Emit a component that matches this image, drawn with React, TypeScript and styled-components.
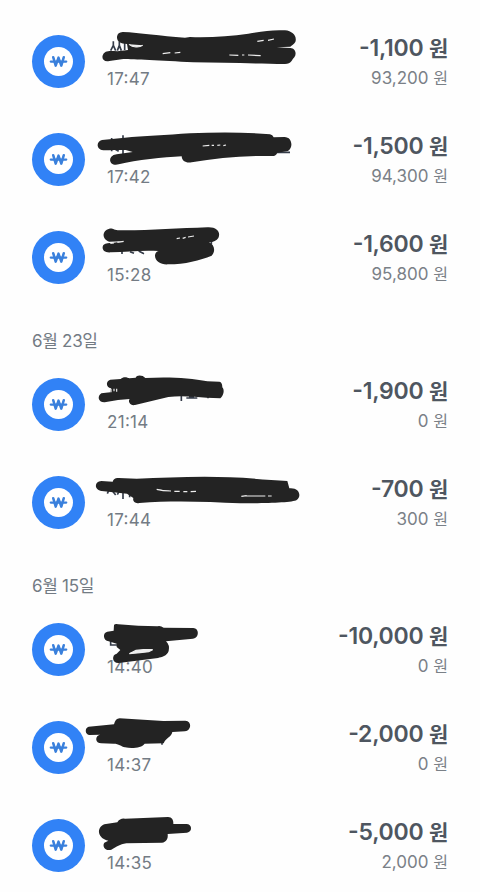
import React from "react";
import styled, { createGlobalStyle } from "styled-components";

const GlobalStyle = createGlobalStyle`
  * {
    box-sizing: border-box;
  }

  body {
    margin: 0;
    background: #fefefe;
    font-family: Inter, "Noto Sans CJK KR", sans-serif;
    font-feature-settings: "case" 1;
  }
`;

const Page = styled.main`
  width: 480px;
  height: 892px;
  padding: 12px 32px 0 32px;
  overflow: hidden;
`;

const DateHeading = styled.h2`
  height: 49px;
  margin: 0;
  padding-top: 22px;
  font-size: 17px;
  font-weight: 400;
  line-height: 26px;
  letter-spacing: -0.3px;
  color: #737b84;
`;

const Row = styled.div`
  display: flex;
  align-items: center;
  height: 98px;
`;

const Badge = styled.div`
  display: flex;
  align-items: center;
  justify-content: center;
  flex: none;
  width: 53px;
  height: 53px;
  border-radius: 50%;
  background: #3182f6;
`;

const Details = styled.div`
  position: relative;
  flex: 1;
  height: 98px;
  margin-left: 22px;
  padding-top: 54px;
`;

const Time = styled.div`
  font-size: 17px;
  line-height: 26px;
  letter-spacing: 0.3px;
  color: #737b84;
`;

const Scribble = styled.svg`
  position: absolute;
  top: 10px;
  left: -17px;
  overflow: visible;
  pointer-events: none;
`;

const Amounts = styled.div`
  display: flex;
  flex-direction: column;
  height: 98px;
  padding-top: 20px;
  text-align: right;
  white-space: nowrap;
`;

const Unit = styled.span<{ size: number }>`
  font-size: ${({ size }) => size}px;
`;

const Amount = styled.div`
  height: 32px;
  font-size: 23px;
  font-weight: 600;
  line-height: 32px;
  letter-spacing: -0.25px;
  color: #4e5660;
`;

const Balance = styled.div`
  margin-top: 1px;
  font-size: 17px;
  line-height: 26px;
  letter-spacing: 0;
  color: #7a8087;
`;

const INK = "#232323";

interface Entry {
  time: string;
  amount: string;
  balance: string;
  // filled outline of the marker, in thirds of a pixel
  marker: string;
  // paper still visible between strokes
  gaps?: string;
  // bits of the name sticking out
  name?: string;
}

interface Group {
  date?: string;
  entries: Entry[];
}

const groups: Group[] = [
  {
    entries: [
      {
        time: "17:47",
        amount: "-1,100",
        balance: "93,200",
        marker:
          "M98 30C150 32 210 42 285 47L300 45C360 47 420 43 475 35C520 28 545 23 585 25C608 27 622 43 616 60C612 67 605 71 601 74L560 76L601 78C616 79 621 94 613 106C605 113 605 126 585 126C500 125 400 122 310 121C210 115 130 112 100 111L58 117C43 122 33 109 39 98C44 87 55 85 82 88L114 84L111 66C92 65 80 59 81 44C82 35 88 31 98 30Z",
        gaps: "M117 67C128 76 147 78 158 70M218 95L241 92M254 93L271 91M502 58L521 55M534 55L552 51M418 99L445 100M456 99L463 99M474 99L512 101",
        name: "M70 58L70 70L62 86M70 70L77 86M88 58L88 70L82 86M88 70L94 86M104 54L104 84M120 65C120 74 145 76 154 68",
      },
      {
        time: "17:42",
        amount: "-1,500",
        balance: "94,300",
        marker:
          "M36 60L104 53C160 49 230 45 300 40C380 36 465 36 540 43Q548 44 551 52L583 51C611 51 609 91 590 94L562 98Q558 108 547 108C460 106 380 114 305 127C288 130 276 124 275 109C220 112 140 120 86 133C65 139 54 122 64 110Q69 104 80 103L128 96L107 90C87 90 60 90 40 91C18 89 18 64 36 60Z",
        gaps: "M338 78L358 76M365 76L372 76M382 76L391 75M400 77L408 75",
        name: "M65 54V94M76 88L86 94M99 46V103M560 97H600",
      },
      {
        time: "15:28",
        amount: "-1,600",
        balance: "95,800",
        marker:
          "M58 32C69 30 72 37 88 37C170 38 265 31 352 28C381 26 393 43 385 60C380 68 371 72 357 73C373 80 378 99 365 113C330 127 285 139 235 139C213 141 194 129 195 112Q196 101 206 99C160 96 110 101 64 103C40 106 34 91 40 81C48 74 57 76 67 75L81 73L98 70L58 71C36 66 34 38 58 32Z",
        gaps: "M61 76L72 75M82 73L101 70M260 62L270 60M278 61L287 58M294 57L312 54",
        name: "M96 99V108M120 101L132 106M146 99L162 107M364 69V79",
      },
    ],
  },
  {
    date: "6월 23일",
    entries: [
      {
        time: "21:14",
        amount: "-1,900",
        balance: "0",
        marker:
          "M61 44L92 42C100 33 113 37 118 40L137 38C140 29 158 30 166 39C230 35 300 38 352 49L388 50C396 51 397 61 397 67C405 75 400 94 391 100L350 98C315 96 275 90 235 96L135 120C120 123 113 108 119 102L84 105L44 112C24 113 21 93 34 85L61 82L63 70C47 66 47 48 61 44Z",
        gaps: "M63 71V82M72 71V79M80 71V80",
        name: "M67 66V88M82 70L90 80M274 88V108M289 99H322M297 94H312M354 93V100",
      },
      {
        time: "17:44",
        amount: "-700",
        balance: "300",
        marker:
          "M34 54L68 56Q72 43 86 45L140 47C230 44 330 38 420 43C480 45 540 51 592 54L598 76C628 73 636 99 620 111C608 119 520 121 450 121C350 116 250 112 148 120C135 123 127 115 130 105L111 92L35 84C12 81 12 55 34 54Z",
        gaps: "M200 79C214 83 227 84 243 84M253 85H269M280 86H292M302 86L318 85M454 100L470 98M470 99H526M534 99H545",
        name: "M56 83L52 92M68 85L77 96M87 86L82 95M99 88V108M119 92V103",
      },
    ],
  },
  {
    date: "6월 15일",
    entries: [
      {
        time: "14:40",
        amount: "-10,000",
        balance: "0",
        marker:
          "M72 45Q75 41 85 43C125 47 165 48 202 49Q211 46 221 53L309 54C328 53 329 84 309 86L228 94Q240 105 236 123C231 138 215 141 204 144L86 159C66 160 64 134 80 131L91 120L80 111V101L56 94C39 91 37 68 52 65L71 62Z",
        gaps: "M118 131L138 121L160 119L188 119L176 125L150 128Z",
        name: "M62 92V105H84",
      },
      {
        time: "14:37",
        amount: "-2,000",
        balance: "0",
        marker:
          "M-4 56L72 49Q76 31 89 31L220 39L286 38C307 40 304 67 285 70L247 72C244 87 227 90 221 106L164 107C155 119 128 123 105 118C93 115 87 107 71 107L34 106C15 106 14 83 30 80L-1 81C-15 80 -17 60 -4 56Z",
        name: "M216 101V110",
      },
      {
        time: "14:35",
        amount: "-5,000",
        balance: "2,000",
        marker:
          "M43 55L82 49Q90 36 105 38L234 33C246 33 251 43 250 54L289 54C307 54 308 78 291 80L233 84C235 99 228 109 216 110L109 112C88 115 81 122 64 131C48 137 35 122 43 110L55 104C25 99 16 67 43 55Z",
      },
    ],
  },
];

const WonIcon = () => (
  <svg width="29" height="29" viewBox="0 0 29 29" fill="none">
    <circle cx="14.5" cy="14.5" r="14.5" fill="#fff" />
    <path
      d="M9.2 10.2L11.7 18.6L14.5 10.6L17.3 18.6L19.8 10.2"
      stroke="#3a80dc"
      strokeWidth="2.5"
      strokeLinecap="round"
      strokeLinejoin="round"
    />
    <path d="M6.7 14.6H22.3" stroke="#3a80dc" strokeWidth="2.1" strokeLinecap="round" />
  </svg>
);

const Transaction: React.FC<{ entry: Entry }> = ({ entry }) => (
  <Row>
    <Badge>
      <WonIcon />
    </Badge>
    <Details>
      <Time>{entry.time}</Time>
      <Scribble width="220" height="80" viewBox="0 0 660 240" fill="none">
        {entry.name && <path d={entry.name} stroke="#343b48" strokeWidth="5" />}
        <path d={entry.marker} fill={INK} />
        {entry.gaps && <path d={entry.gaps} fill="#eee" stroke="#eee" strokeWidth="3.5" />}
      </Scribble>
    </Details>
    <Amounts>
      <Amount>
        {entry.amount} <Unit size={21}>원</Unit>
      </Amount>
      <Balance>
        {entry.balance} <Unit size={16}>원</Unit>
      </Balance>
    </Amounts>
  </Row>
);

export default function App() {
  return (
    <>
      <GlobalStyle />
      <Page>
        {groups.map((group, i) => (
          <section key={i}>
            {group.date && <DateHeading>{group.date}</DateHeading>}
            {group.entries.map((entry) => (
              <Transaction key={entry.time} entry={entry} />
            ))}
          </section>
        ))}
      </Page>
    </>
  );
}
